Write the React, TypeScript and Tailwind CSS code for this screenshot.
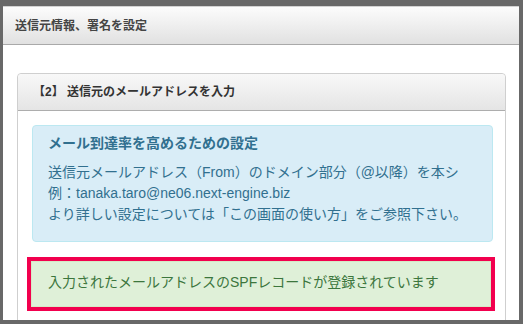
export default function App() {
  return (
    <div
      className="w-[523px] h-[324px] overflow-hidden bg-[#686868] pt-[6px] pl-[3px] pr-[4px] pb-[4px]"
      style={{ fontFamily: '"Liberation Sans", "Noto Sans CJK JP", sans-serif' }}
    >
      <div className="h-full overflow-hidden bg-white">
        {/* 画面ヘッダー */}
        <div className="h-[39px] flex items-center pl-[12px] border-t border-b border-t-[#d2d2d2] border-b-[#a9a9a9] bg-gradient-to-b from-[#fcfcfc] to-[#e1e1e1] text-[12px] font-bold text-[#444]">
          送信元情報、署名を設定
        </div>

        <div className="pt-[28px] pl-[14px] pr-[13px]">
          <div className="border border-[#cfcfcf] rounded-t-[4px] h-[260px]">
            <div className="h-[37px] flex items-center pl-[15px] rounded-t-[4px] border-b border-[#adadad] bg-gradient-to-b from-[#f8f8f8] to-[#e5e5e5] text-[12px] font-bold text-[#333]">
              【2】 送信元のメールアドレスを入力
            </div>

            <div className="px-[14px] pr-[12px] pt-[14px]">
              <div className="rounded-[4px] border border-[#bce8f1] bg-[#d9edf7] px-[15px] pt-[7px] pb-[16px] text-[#31708f]">
                <p className="text-[14px] leading-[20px] font-bold mb-[9px]">メール到達率を高めるための設定</p>
                <p className="text-[14px] leading-[21px] whitespace-nowrap">
                  送信元メールアドレス（From）のドメイン部分（@以降）を本シ
                  <br />
                  例：tanaka.taro@ne06.next-engine.biz
                  <br />
                  より詳しい設定については「この画面の使い方」をご参照下さい。
                </p>
              </div>

              <div className="mt-[15px] -ml-[5px] -mr-[2px] border-4 border-[#f2004e]">
                <div className="h-[46px] pt-[10px] pl-[16px] border border-[#d6e9c6] bg-[#dff0d8] text-[14px] leading-[20px] text-[#3c763d]">
                  入力されたメールアドレスのSPFレコードが登録されています
                </div>
              </div>
            </div>
          </div>
        </div>
      </div>
    </div>
  )
}
